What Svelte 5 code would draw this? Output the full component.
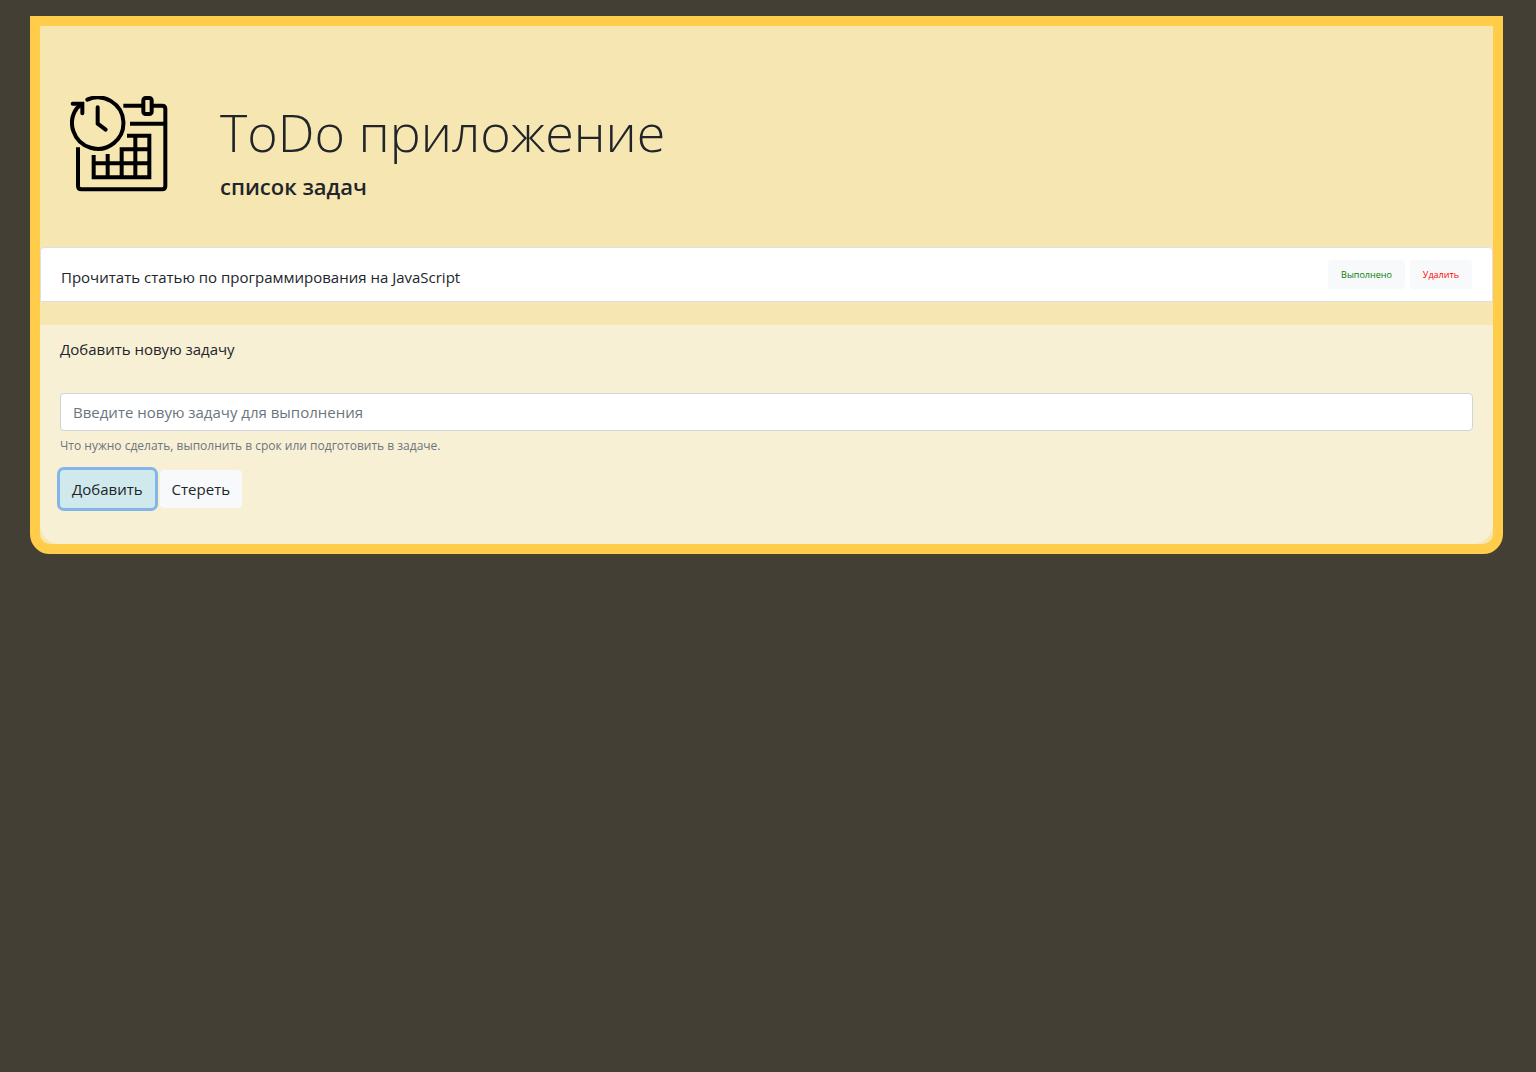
<script>
  let tasks = $state([
    { id: 1, title: 'Прочитать статью по программирования на JavaScript', done: false },
  ]);
  let draft = $state('');
  let nextId = 2;

  function addTask(event) {
    event.preventDefault();
    const title = draft.trim();
    if (!title) return;
    tasks.push({ id: nextId++, title, done: false });
    draft = '';
  }

  function removeTask(id) {
    tasks = tasks.filter((task) => task.id !== id);
  }
</script>

<main class="card">
  <header class="header">
    <svg class="logo" viewBox="30 30 294 288" aria-hidden="true">
      <g fill="none" stroke="#000" stroke-width="12">
        <path d="M82 41A77 77 0 1 1 51 66L65 54" stroke-linecap="round" />
        <path d="M38 53H67V82" stroke-linecap="round" />
        <path d="M113 64V113L137 131" stroke-linecap="round" stroke-linejoin="round" />
        <path d="M190 59H246M278 59H306Q316 59 316 69V300Q316 310 306 310H64Q54 310 54 300V184" />
        <rect x="250" y="36" width="25" height="48" rx="7" />
        <path d="M210 113H317" />
        <path d="M201 149H268V274H101V207M226 149V274M185 274V190H268M143 204V274M101 232H268" />
      </g>
    </svg>
    <div>
      <h1 class="title">ToDo приложение</h1>
      <h2 class="subtitle">список задач</h2>
    </div>
  </header>

  <ul class="tasks">
    {#each tasks as task (task.id)}
      <li class="task">
        <span class="task-title" class:done={task.done}>{task.title}</span>
        <div class="actions">
          <button class="small complete" type="button" onclick={() => (task.done = !task.done)}>Выполнено</button>
          <button class="small delete" type="button" onclick={() => removeTask(task.id)}>Удалить</button>
        </div>
      </li>
    {/each}
  </ul>

  <form class="form" onsubmit={addTask}>
    <label class="label" for="new-task">Добавить новую задачу</label>
    <input
      id="new-task"
      class="field"
      type="text"
      placeholder="Введите новую задачу для выполнения"
      aria-describedby="new-task-help"
      bind:value={draft}
    />
    <small id="new-task-help" class="help">Что нужно сделать, выполнить в срок или подготовить в задаче.</small>
    <div class="buttons">
      <button class="button primary" type="submit">Добавить</button>
      <button class="button" type="button" onclick={() => (draft = '')}>Стереть</button>
    </div>
  </form>
</main>

<style>
  :global(body) {
    margin: 0;
    background: #443f34;
    color: #212529;
    font-family: 'Open Sans', 'Noto Sans', sans-serif;
    font-size: 15px;
    line-height: 24px;
  }

  .card {
    margin: 16px 33px 16px 30px;
    border: 10px solid #ffcd4a;
    border-radius: 0 0 20px 20px;
    background: #f6e6b2;
  }

  .header {
    display: flex;
    gap: 52px;
    padding: 70px 30px 46px;
  }

  .logo {
    flex: none;
    width: 98px;
    height: 96px;
  }

  .title {
    margin: 2px 0 7px;
    font-size: 52px;
    font-weight: 300;
    line-height: 67px;
  }

  .subtitle {
    margin: 0;
    font-size: 22px;
    font-weight: 600;
    line-height: 29px;
  }

  .tasks {
    margin: 0 0 23px;
    padding: 0;
    list-style: none;
  }

  .task {
    display: flex;
    justify-content: space-between;
    align-items: flex-start;
    padding: 12px 20px;
    border: 1px solid #dfdfdf;
    background: #fff;
  }

  .task + .task {
    border-top: 0;
  }

  .task:first-child {
    border-radius: 4px 4px 0 0;
  }

  .task-title {
    padding-top: 5px;
  }

  .done {
    text-decoration: line-through;
  }

  .actions {
    display: flex;
    gap: 5px;
  }

  button {
    border: 0;
    border-radius: 4px;
    background: #f8f9fa;
    color: #212529;
    font-family: inherit;
    cursor: pointer;
  }

  .small {
    padding: 7px 13px;
    font-size: 9px;
    line-height: 15px;
  }

  .complete {
    color: #008000;
  }

  .delete {
    color: #f00;
  }

  .form {
    padding: 12px 20px 36px;
    border-radius: 0 0 20px 20px;
    background: #f8f0d5;
  }

  .label {
    display: block;
    margin-bottom: 32px;
  }

  .field {
    display: block;
    box-sizing: border-box;
    width: 100%;
    height: 38px;
    padding: 6px 12px;
    border: 1px solid #ced4da;
    border-radius: 4px;
    background: #fff;
    color: #495057;
    font: inherit;
  }

  .field::placeholder {
    color: #6c757d;
    opacity: 1;
  }

  .help {
    display: block;
    margin: 3px 0 13px;
    color: #6c757d;
    font-size: 12px;
    line-height: 23px;
  }

  .buttons {
    display: flex;
    gap: 5px;
  }

  .button {
    padding: 7px 12px;
    font-size: 15px;
    line-height: 24px;
  }

  .primary {
    background: #cfe9ed;
    box-shadow: 0 0 0 3px #83b4ea;
  }
</style>
